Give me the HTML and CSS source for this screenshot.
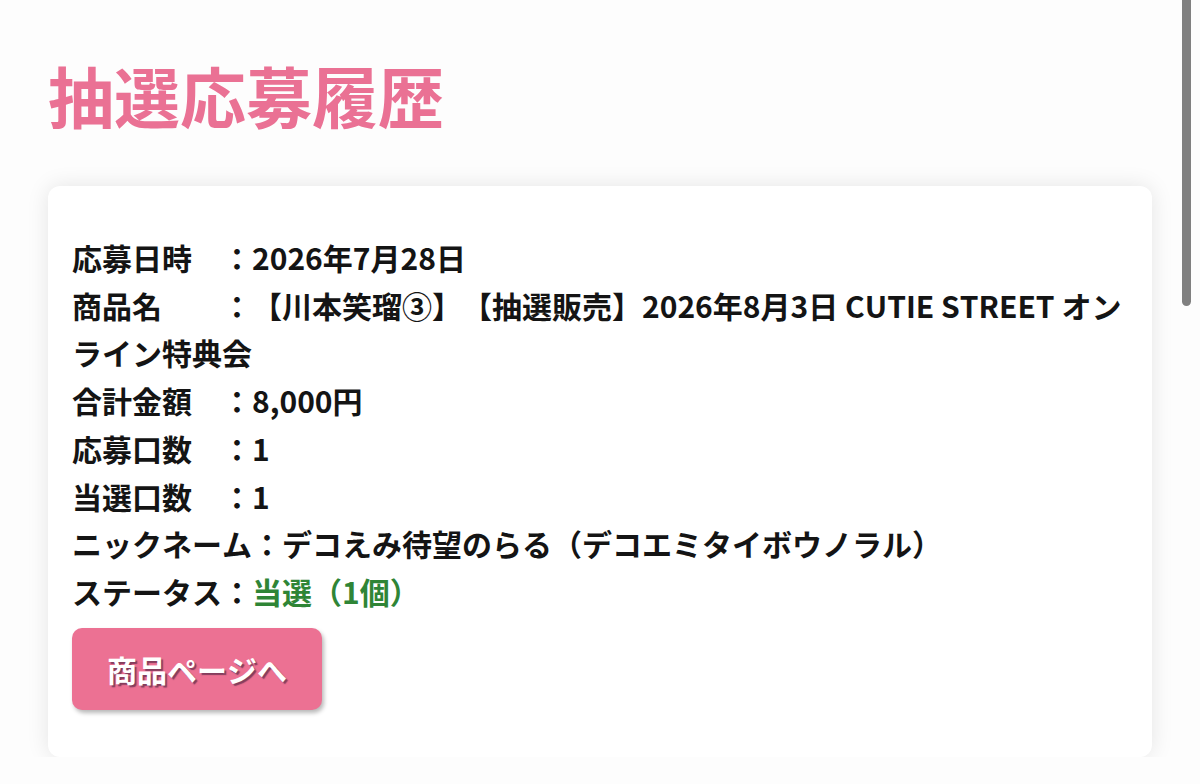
FILE: index.html
```html
<!DOCTYPE html>
<html lang="ja">
<head>
<meta charset="utf-8">
<link rel="stylesheet" href="styles.css">
</head>
<body>
<main class="page">
  <h1 class="title">抽選応募履歴</h1>
  <section class="card">
    <div class="info">
      <p class="row">応募日時　：2026年7月28日</p>
      <p class="row">商品名　　：【川本笑瑠③】【抽選販売】2026年8月3日 CUTIE STREET オンライン特典会</p>
      <p class="row">合計金額　：8,000円</p>
      <p class="row">応募口数　：1</p>
      <p class="row">当選口数　：1</p>
      <p class="row">ニックネーム：デコえみ待望のらる（デコエミタイボウノラル）</p>
      <p class="row">ステータス：<span class="won">当選（1個）</span></p>
    </div>
    <a class="btn" href="#">商品ページへ</a>
  </section>
</main>
<div class="scroll-indicator"></div>
</body>
</html>
```

FILE: styles.css
```css
html, body {
  margin: 0;
  padding: 0;
  background: #fdfdfd;
  font-family: "Noto Sans CJK JP", "Noto Sans", sans-serif;
  color: #141414;
  overflow: hidden;
  text-spacing-trim: space-all;
  font-kerning: none;
}

.page {
  padding: 0 48px;
}

.title {
  margin: 0;
  padding-top: 62px;
  font-size: 66px;
  line-height: 65px;
  font-weight: 700;
  color: #ea7194;
  letter-spacing: 0;
}

.card {
  margin-top: 59px;
  background: #ffffff;
  border-radius: 12px;
  box-shadow: 0 0 22px rgba(0, 0, 0, 0.10);
  padding: 48px 24px 47px;
}

.info {
  display: flex;
  flex-direction: column;
}

.row {
  margin: 0;
  font-size: 30px;
  line-height: 47.7px;
  font-weight: 700;
}

.won {
  color: #2f8536;
}

.btn {
  display: inline-flex;
  align-items: center;
  justify-content: center;
  margin-top: 12px;
  width: 250px;
  height: 82px;
  box-sizing: border-box;
  background: #ec7193;
  border-radius: 10px;
  box-shadow: 2px 3px 4px rgba(0, 0, 0, 0.28);
  color: #ffffff;
  text-decoration: none;
  font-size: 30px;
  font-weight: 700;
  text-shadow: 2px 2px 1px rgba(90, 40, 70, 0.7);
}

.scroll-indicator {
  position: absolute;
  top: 0;
  left: 1182px;
  width: 9px;
  height: 306px;
  background: #808080;
  border-radius: 0 0 5px 5px;
}
```
